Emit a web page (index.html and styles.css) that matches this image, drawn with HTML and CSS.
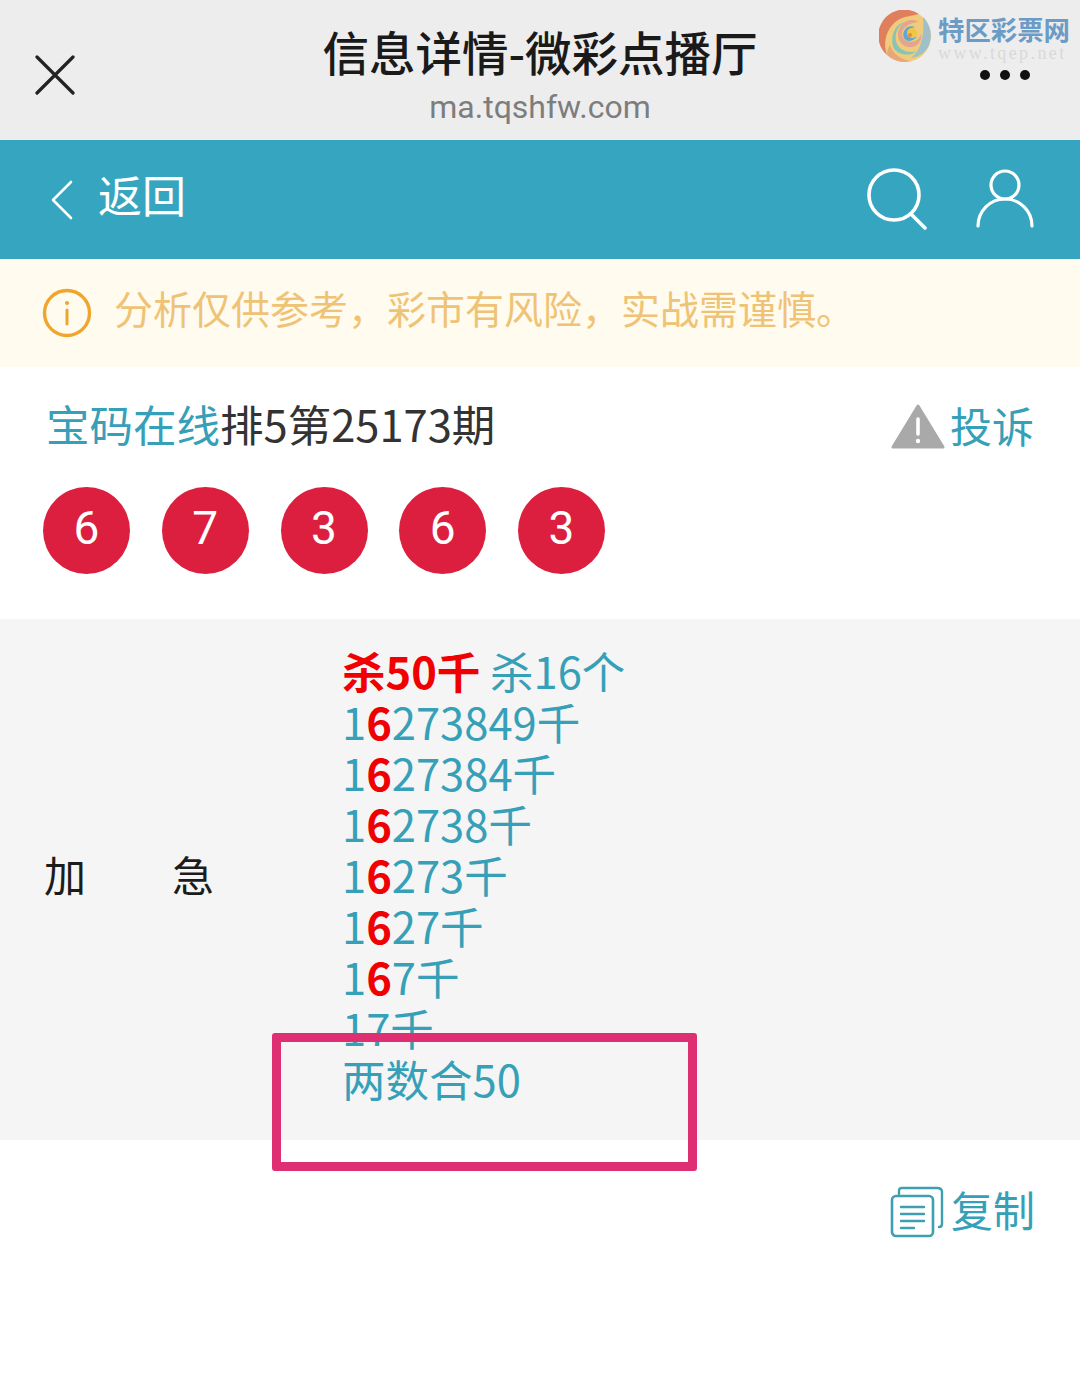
FILE: index.html
```html
<!DOCTYPE html>
<html lang="zh-CN">
<head>
  <meta charset="UTF-8" />
  <title>信息详情-微彩点播厅</title>
  <meta name="viewport" content="width=device-width, initial-scale=1" />
  <link rel="stylesheet" href="styles.css">
</head>
<body>
  <div class="page">
    <!-- wechat title bar -->
    <div class="titlebar">
      <svg class="close-icon" width="40" height="40" viewBox="0 0 40 40">
        <path d="M2 2L38 38M38 2L2 38" fill="none" stroke="#222" stroke-width="3.2" stroke-linecap="round" />
      </svg>
      <div class="title-text">
        <div class="title-main">信息详情-微彩点播厅</div>
        <div class="title-url">ma.tqshfw.com</div>
      </div>
      <div class="more-dots"><span></span><span></span><span></span></div>
    </div>

    <!-- watermark -->
    <div class="watermark">
      <svg class="swirl" width="52" height="52" viewBox="0 0 52 52">
        <circle cx="26" cy="26" r="26" fill="#f0cb7c" />
        <path d="M30 0A26 26 0 0 0 8 45C3 32 8 12 26 7C31 6 36 5 40 4A26 26 0 0 0 30 0Z" fill="#df7f5e" />
        <path d="M8 45A26 26 0 0 0 32 51C22 50 14 44 11 35C9 38 8 42 8 45Z" fill="#e8a67a" />
        <path d="M44 7A26 26 0 0 1 50 35C47 42 40 47 32 48C40 42 46 30 44 7Z" fill="#9fc0c8" />
        <path d="M14 36C16 44 30 48 38 41C32 43 22 42 18 34C15 27 17 16 26 12C18 13 11 24 14 36Z" fill="#86c5b4" />
        <path d="M40 12C30 6 18 14 19 26C20 36 32 41 39 34C42 31 43 27 42 24C40 32 30 34 25 29C20 23 25 13 40 12Z" fill="#e4a58e" />
        <path d="M36 17C28 14 22 22 25 28C28 33 36 31 38 26C35 29 30 28 29 24C28 20 32 18 36 17Z" fill="#5fa8d0" />
        <circle cx="33" cy="23" r="5" fill="#f2c542" />
        <circle cx="31" cy="25" r="2" fill="#e58a4e" />
      </svg>
      <div class="watermark-text">
        <div class="watermark-name">特区彩票网</div>
        <div class="watermark-url">www.tqep.net</div>
      </div>
    </div>

    <!-- site header -->
    <div class="navbar">
      <div class="back">
        <svg width="26" height="40" viewBox="0 0 26 40">
          <path d="M22 2L4 20L22 38" fill="none" stroke="#fff" stroke-width="2.6" stroke-linecap="round" stroke-linejoin="round" />
        </svg>
        <span>返回</span>
      </div>
      <div class="nav-icons">
        <svg width="62" height="62" viewBox="0 0 62 62">
          <circle cx="27" cy="27" r="25" fill="none" stroke="#fff" stroke-width="3.6" />
          <path d="M44 46L58 60" fill="none" stroke="#fff" stroke-width="3.6" stroke-linecap="round" />
        </svg>
        <svg width="58" height="60" viewBox="0 0 58 60">
          <circle cx="29" cy="16" r="14" fill="none" stroke="#fff" stroke-width="3.2" />
          <path d="M2 57C2 42 14 30 29 30C44 30 56 42 56 57" fill="none" stroke="#fff" stroke-width="3.2" stroke-linecap="round" />
        </svg>
      </div>
    </div>

    <div class="notice">
      <svg width="50" height="50" viewBox="0 0 50 50">
        <circle cx="25" cy="25" r="22.5" fill="none" stroke="#eea62c" stroke-width="3.4" />
        <circle cx="25" cy="15" r="2" fill="#eea62c" />
        <path d="M25 22V36" fill="none" stroke="#eea62c" stroke-width="3" stroke-linecap="round" />
      </svg>
      <span>分析仅供参考，彩市有风险，实战需谨慎。</span>
    </div>

    <div class="issue-row">
      <h2 class="issue-title"><span class="teal">宝码在线</span>排5第25173期</h2>
      <div class="report">
        <svg width="54" height="46" viewBox="0 0 54 46">
          <path d="M27 2L52 43H2Z" fill="#a9a9a9" stroke="#a9a9a9" stroke-width="3" stroke-linejoin="round" />
          <path d="M27 15V30" fill="none" stroke="#fff" stroke-width="3.6" stroke-linecap="round" />
          <circle cx="27" cy="37" r="2.2" fill="#fff" />
        </svg>
        <span>投诉</span>
      </div>
    </div>

    <div class="balls">
      <span class="ball">6</span>
      <span class="ball">7</span>
      <span class="ball">3</span>
      <span class="ball">6</span>
      <span class="ball">3</span>
    </div>

    <div class="detail">
      <div class="detail-label"><span>加</span><span>急</span></div>
      <div class="detail-lines">
        <div><b class="hit">杀50千</b> 杀16个</div>
        <div>1<b class="hit">6</b>273849千</div>
        <div>1<b class="hit">6</b>27384千</div>
        <div>1<b class="hit">6</b>2738千</div>
        <div>1<b class="hit">6</b>273千</div>
        <div>1<b class="hit">6</b>27千</div>
        <div>1<b class="hit">6</b>7千</div>
        <div>17千</div>
        <div>两数合50</div>
      </div>
    </div>

    <div class="copy-row">
      <svg width="54" height="52" viewBox="0 0 54 52">
        <path d="M9 8V5C9 3 10 2 12 2H47C50 2 52 3 52 6V38C52 40 51 41 49 41" fill="none" stroke="#3f9fb0" stroke-width="2.4" stroke-linecap="round" />
        <rect x="2" y="10" width="41" height="40" rx="4" fill="#fff" stroke="#3f9fb0" stroke-width="2.6" />
        <path d="M11 21H34M11 28H34M11 35H34M11 42H24" fill="none" stroke="#3f9fb0" stroke-width="2.4" stroke-linecap="round" />
      </svg>
      <span>复制</span>
    </div>

    <!-- annotation drawn over the screenshot -->
    <div class="mark-box"></div>
  </div>
</body>
</html>
```

FILE: styles.css
```css
body {
  margin: 0;
  background: #fff;
  font-family: "Noto Sans CJK SC", "Noto Sans", sans-serif;
}

.page {
  position: relative;
  width: 1080px;
  height: 1380px;
  overflow: hidden;
  background: #fff;
}

.titlebar {
  position: relative;
  height: 140px;
  background: #ededed;
  display: flex;
  justify-content: center;
  text-align: center;
}

.close-icon {
  position: absolute;
  left: 35px;
  top: 55px;
}

.title-text {
  padding-top: 20px;
}

.title-main {
  font-size: 46.5px;
  line-height: 62px;
  font-weight: 500;
  color: #1a1a1a;
}

.title-url {
  margin-top: 3px;
  font-size: 32px;
  line-height: 44px;
  color: #7d7d7d;
  font-family: "Roboto", "Noto Sans", sans-serif;
}

.more-dots {
  position: absolute;
  right: 50px;
  top: 70px;
  display: flex;
  gap: 10px;
}

.more-dots span {
  width: 10px;
  height: 10px;
  border-radius: 50%;
  background: #111;
}

.watermark {
  position: absolute;
  left: 879px;
  top: 10px;
  display: flex;
  gap: 7px;
}

.watermark-name {
  font-size: 26.4px;
  line-height: 36px;
  margin-top: 1px;
  font-weight: 700;
  color: #6c9bc6;
  white-space: nowrap;
}

.watermark-url {
  margin-top: -2px;
  font-family: "Liberation Serif", serif;
  font-size: 18px;
  line-height: 17px;
  letter-spacing: 2.4px;
  color: #d9d9d9;
  white-space: nowrap;
}

.navbar {
  height: 119px;
  background: #36a6c0;
  display: flex;
  align-items: center;
  justify-content: space-between;
  padding: 0 46px 0 49px;
  color: #fff;
}

.back {
  display: flex;
  align-items: center;
  gap: 23px;
  font-size: 44px;
}

.back span {
  margin-bottom: 12px;
}

.nav-icons {
  display: flex;
  align-items: center;
  gap: 47px;
  margin-bottom: 2px;
}

.notice {
  height: 108px;
  background: #fffbef;
  display: flex;
  align-items: center;
  gap: 22px;
  padding-left: 42px;
  font-size: 39px;
  color: #efc375;
}

.notice span {
  margin-bottom: 12px;
}

.issue-row {
  display: flex;
  align-items: center;
  justify-content: space-between;
  height: 58px;
  padding: 28px 46px 34px 46px;
}

.issue-title {
  margin: 0;
  font-size: 43.5px;
  font-weight: 400;
  line-height: 58px;
  color: #333;
}

.teal {
  color: #36a0b8;
}

.report {
  display: flex;
  align-items: center;
  gap: 5px;
  font-size: 42px;
  color: #36a0b8;
}

.report svg {
  margin-top: 5px;
}

.balls {
  display: flex;
  gap: 31.75px;
  padding: 0 0 45px 43px;
}

.ball {
  width: 87px;
  height: 87px;
  border-radius: 50%;
  background: #dc1f3f;
  color: #fff;
  font-size: 46px;
  line-height: 83px;
  text-align: center;
  font-family: "Roboto", sans-serif;
}

.detail {
  height: 521px;
  background: #f5f5f5;
  display: flex;
  align-items: center;
}

.detail-label {
  width: 170px;
  margin: 0 128px 12px 44px;
  display: flex;
  justify-content: space-between;
  font-size: 42px;
  color: #1c1c1c;
}

.detail-lines {
  font-size: 43.5px;
  line-height: 51px;
  color: #36a0b8;
  white-space: nowrap;
  margin-top: -10px;
}

.hit {
  color: #f00000;
  font-weight: 700;
}

.copy-row {
  display: flex;
  align-items: center;
  justify-content: flex-end;
  gap: 7px;
  padding: 38px 45px 0 0;
  font-size: 42px;
  color: #36a0b8;
}

.copy-row svg {
  margin-top: 6px;
}

.mark-box {
  position: absolute;
  left: 272px;
  top: 1033px;
  width: 425px;
  height: 138px;
  box-sizing: border-box;
  border: 9px solid #de2f73;
  border-radius: 3px;
}
```
